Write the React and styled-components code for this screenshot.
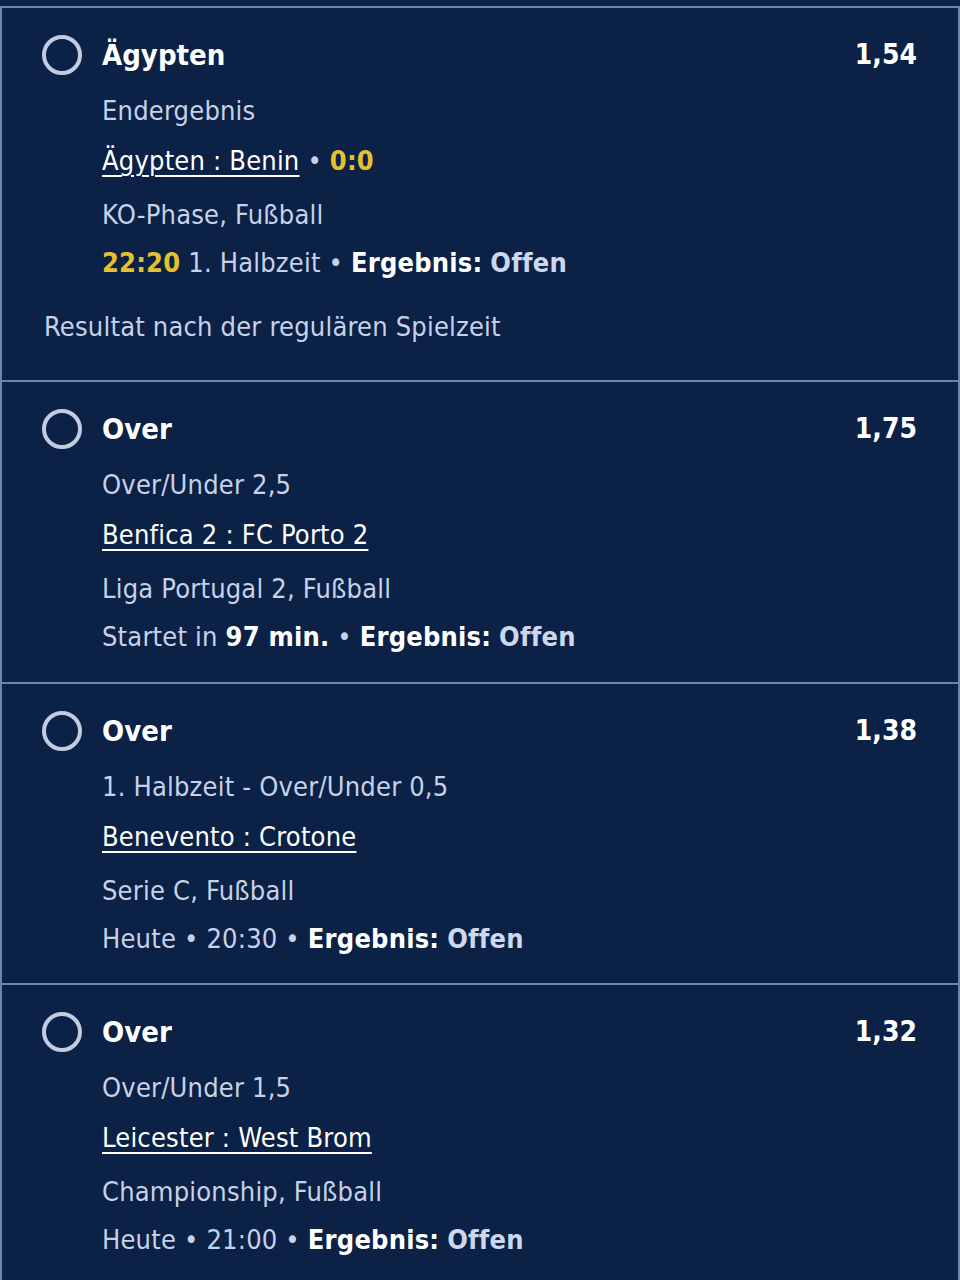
import styled, { createGlobalStyle } from 'styled-components';

const GlobalStyle = createGlobalStyle`
    html, body {
        margin: 0;
        padding: 0;
        background: #0b2146;
    }
    body {
        font-family: "Liberation Sans Narrow", "DejaVu Sans Condensed", "Liberation Sans", sans-serif;
        color: #c7d2e8;
    }
`;

const List = styled.div`
    width: 960px;
    box-sizing: border-box;
    padding-top: 6px;
    background: #0b2146;
`;

const Card = styled.div`
    box-sizing: border-box;
    height: ${props => props.h}px;
    border: 2px solid #6b85b2;
    border-bottom: none;
    padding: 21px 41px 0 40px;
`;

const Row = styled.div`
    display: flex;
    align-items: flex-start;
`;

const Radio = styled.span`
    flex: none;
    width: 40px;
    height: 40px;
    box-sizing: border-box;
    border: 4px solid #c3cbdf;
    border-radius: 50%;
    margin-top: 6px;
`;

const Body = styled.div`
    flex: 1;
    margin-left: 20px;
`;

const Title = styled.div`
    font-size: 29px;
    font-weight: 700;
    color: #ffffff;
    line-height: 52px;
`;

const Odds = styled.div`
    font-size: 28px;
    font-weight: 700;
    color: #ffffff;
    line-height: 52px;
`;

const Line = styled.div`
    font-size: 27px;
    letter-spacing: 0.2px;
    line-height: 50px;
    margin-top: ${props => props.mt || 0}px;
    color: #c7d2e8;
    white-space: nowrap;
`;

const Match = styled.span`
    color: #ffffff;
    text-decoration: underline;
    text-underline-offset: 5px;
    text-decoration-thickness: 2px;
`;

const Yellow = styled.span`
    color: #e5c12f;
    font-weight: 700;
`;

const Strong = styled.span`
    color: ${props => props.light ? '#cdd8ee' : '#ffffff'};
    font-weight: 700;
`;

const Note = styled.div`
    font-size: 27px;
    letter-spacing: 0.2px;
    color: #c7d2e8;
    margin-top: 23px;
    margin-left: 2px;
`;

const Dot = () => <span> • </span>;

const Result = () => (
    <>
        <Strong>Ergebnis:</Strong> <Strong light>Offen</Strong>
    </>
);

const bets = [
    {
        h: 374,
        pick: 'Ägypten',
        odds: '1,54',
        market: 'Endergebnis',
        match: <><Match>Ägypten : Benin</Match><Dot /><Yellow>0:0</Yellow></>,
        league: 'KO-Phase, Fußball',
        status: <><Yellow>22:20</Yellow> 1. Halbzeit<Dot /><Result /></>,
        note: 'Resultat nach der regulären Spielzeit'
    },
    {
        h: 302,
        pick: 'Over',
        odds: '1,75',
        market: 'Over/Under 2,5',
        match: <Match>Benfica 2 : FC Porto 2</Match>,
        league: 'Liga Portugal 2, Fußball',
        status: <>Startet in <Strong>97 min.</Strong><Dot /><Result /></>
    },
    {
        h: 301,
        pick: 'Over',
        odds: '1,38',
        market: '1. Halbzeit - Over/Under 0,5',
        match: <Match>Benevento : Crotone</Match>,
        league: 'Serie C, Fußball',
        status: <>Heute<Dot />20:30<Dot /><Result /></>
    },
    {
        h: 300,
        pick: 'Over',
        odds: '1,32',
        market: 'Over/Under 1,5',
        match: <Match>Leicester : West Brom</Match>,
        league: 'Championship, Fußball',
        status: <>Heute<Dot />21:00<Dot /><Result /></>
    }
];

function App() {
    return (
        <>
            <GlobalStyle />
            <List>
                {bets.map((bet, i) => (
                    <Card key={i} h={bet.h}>
                        <Row>
                            <Radio />
                            <Body>
                                <Title>{bet.pick}</Title>
                                <Line mt={5}>{bet.market}</Line>
                                <Line>{bet.match}</Line>
                                <Line mt={4}>{bet.league}</Line>
                                <Line mt={-2}>{bet.status}</Line>
                            </Body>
                            <Odds>{bet.odds}</Odds>
                        </Row>
                        {bet.note && <Note>{bet.note}</Note>}
                    </Card>
                ))}
            </List>
        </>
    );
}

export default App;
